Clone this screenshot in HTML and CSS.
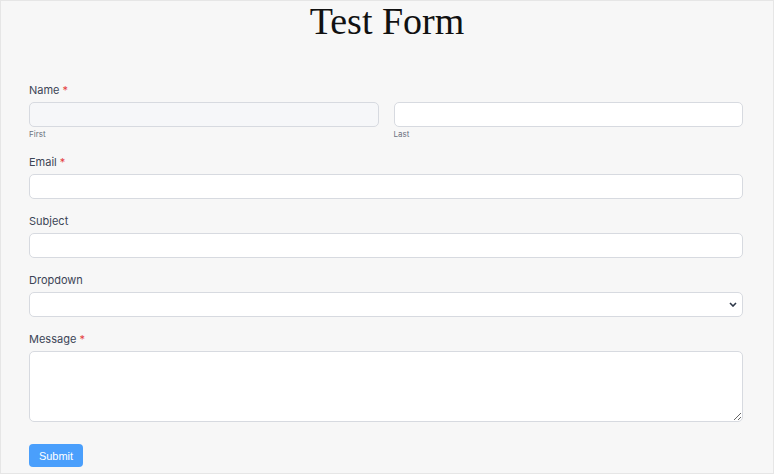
FILE: index.html
```html
<!DOCTYPE html>
<html lang="en">
<head>
<meta charset="utf-8">
<title>Test Form</title>
<link rel="stylesheet" href="styles.css">
</head>
<body>
<div class="frame">
  <h1 class="title">Test Form</h1>
  <form class="form">
    <div class="field">
      <label class="label">Name <span class="req">*</span></label>
      <div class="row">
        <div class="col">
          <input class="input input-first" type="text">
          <div class="sublabel">First</div>
        </div>
        <div class="col">
          <input class="input" type="text">
          <div class="sublabel">Last</div>
        </div>
      </div>
    </div>
    <div class="field">
      <label class="label">Email <span class="req">*</span></label>
      <input class="input" type="email">
    </div>
    <div class="field">
      <label class="label">Subject</label>
      <input class="input" type="text">
    </div>
    <div class="field">
      <label class="label">Dropdown</label>
      <div class="select-wrap">
        <select class="input select"><option></option></select>
        <svg class="chev" width="8" height="5" viewBox="0 0 8 5"><path d="M1 1l3 3 3-3" fill="none" stroke="#2d3748" stroke-width="1.6"/></svg>
      </div>
    </div>
    <div class="field">
      <label class="label">Message <span class="req">*</span></label>
      <textarea class="input textarea"></textarea>
    </div>
    <button class="submit" type="button">Submit</button>
  </form>
</div>
</body>
</html>
```
FILE: styles.css
```css
html, body {
  margin: 0;
  padding: 0;
  background: #ffffff;
}
.frame {
  box-sizing: border-box;
  width: 774px;
  height: 474px;
  border: 1px solid #e6e6e6;
  background: #f7f7f7;
  overflow: hidden;
  font-family: Inter, "Liberation Sans", sans-serif;
}
.title {
  margin: 0 0 4px;
  height: 40px;
  line-height: 40px;
  text-align: center;
  font-family: "Liberation Serif", serif;
  font-weight: normal;
  font-size: 38px;
  color: #111111;
}
.form {
  padding: 39px 30px 0 28px;
}
.field {
  margin-bottom: 16px;
}
.label {
  display: block;
  font-size: 11px;
  line-height: 13px;
  color: #3c4556;
  margin-bottom: 5px;
}
.req {
  color: #e53e3e;
}
.row {
  display: flex;
  gap: 15px;
}
.col {
  flex: 1;
}
.input {
  display: block;
  box-sizing: border-box;
  width: 100%;
  height: 25px;
  margin: 0;
  border: 1px solid #d7dae0;
  border-radius: 5px;
  background: #ffffff;
  font-family: inherit;
  font-size: 11px;
  outline: none;
}
.input-first {
  background: #f6f7f9;
}
.sublabel {
  font-size: 8px;
  line-height: 11px;
  margin-top: 2px;
  color: #6b7280;
}
.select-wrap {
  position: relative;
}
.select {
  appearance: none;
  -webkit-appearance: none;
}
.chev {
  position: absolute;
  right: 6px;
  top: 10px;
}
.textarea {
  height: 71px;
  resize: vertical;
}
.submit {
  display: block;
  margin-top: 22px;
  width: 54px;
  height: 23px;
  border: none;
  border-radius: 4px;
  background: #4a9ffc;
  color: #ffffff;
  font-family: "Liberation Sans", Arial, sans-serif;
  font-size: 11px;
  padding: 0;
}
```
